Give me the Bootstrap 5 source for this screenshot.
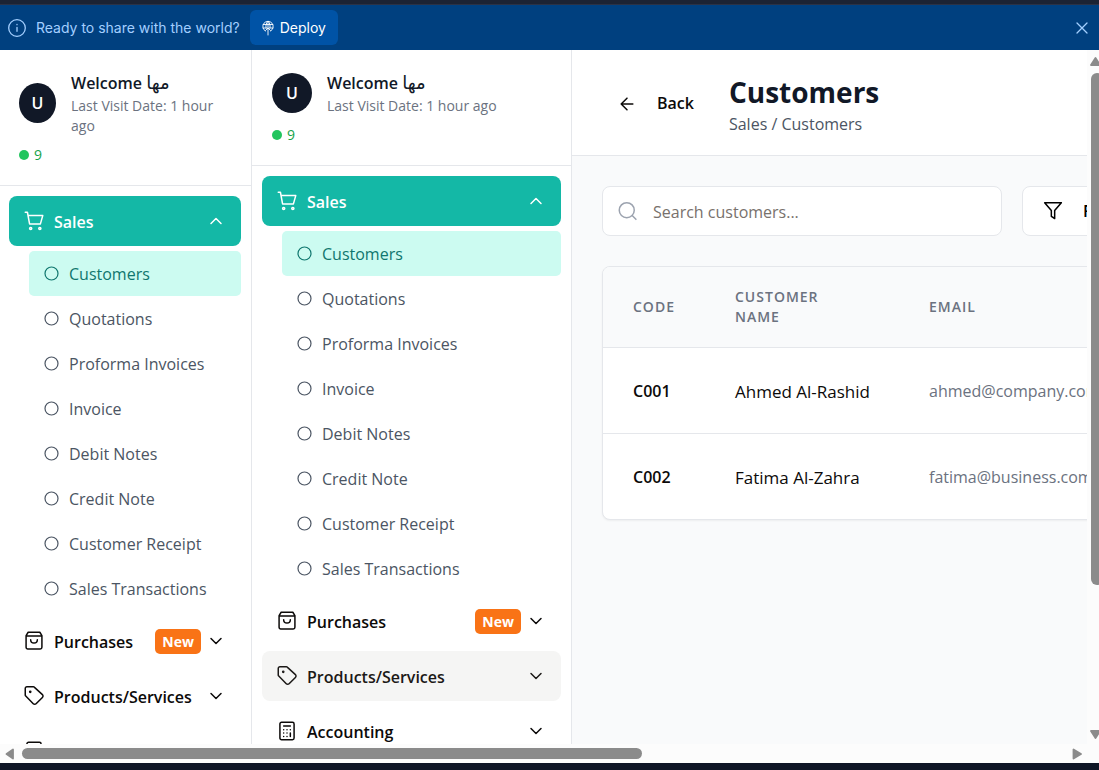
<!DOCTYPE html>
<html lang="en">
<head>
<meta charset="utf-8">
<meta name="viewport" content="width=device-width, initial-scale=1">
<title>Customers</title>
<link href="https://cdn.jsdelivr.net/npm/bootstrap@5.3.0/dist/css/bootstrap.min.css" rel="stylesheet">
<style>
  :root { --line: #e5e7eb; --ink: #111827; --muted: #6b7280; --thumb: #8b8b8b; }
  body { font-family: "Open Sans", "Noto Sans", "DejaVu Sans", sans-serif; font-size: 16px; line-height: 25px; background: #0e1525; color: #0c0a09; }
  svg { fill: none; stroke: currentColor; stroke-width: 1.8; stroke-linecap: round; stroke-linejoin: round; flex: none; }
  .ico { width: 20px; height: 20px; }
  .shell { height: 100vh; padding: 4px 0 7px; background: #0e1525; }
  .deploy-bar { height: 46px; background: #00407f; color: #a3cfff; border-top: 1px solid #2b3245; font: 14px/20px Inter, "Noto Sans", sans-serif; box-shadow: 0 -4px 0 #1c2333; }
  .deploy-note { margin: 0 10px; }
  .btn-deploy { --bs-btn-color: #fff; --bs-btn-bg: #0053a6; --bs-btn-hover-bg: #0062c4; --bs-btn-hover-color: #fff; height: 35px; border: 0; border-radius: 6px; font: inherit; padding: 0 12px 0 10px; }
  .plain { border: 0; background: none; color: inherit; padding: 0; }
  .pane { background: #fff; }
  .side { flex: 0 0 320px; border-right: 1px solid var(--line); background: #fff; overflow: hidden; }
  .side-narrow { flex-basis: 253px; margin-left: -1px; }
  .user-box { padding: 20px; border-bottom: 1px solid var(--line); }
  .user-row { gap: 15px; }
  .user-text { min-width: 0; padding-top: 1px; }
  .avatar { flex: 0 0 40px; height: 40px; background: var(--ink); color: #fff; border-radius: 50%; font-weight: 600; }
  .side-narrow .avatar { flex: 0 0 37px; }
  .user-name { color: var(--ink); font-weight: 600; }
  .arabic { font: 18px/20px "DejaVu Sans", sans-serif; }
  .visit { font-size: 14px; line-height: 20px; color: var(--muted); }
  .online { font-size: 14px; line-height: 20px; color: #16a34a; margin-top: 9px; gap: 5px; }
  .dot { width: 10px; height: 10px; border-radius: 50%; background: #22c55e; }
  .menu { padding: 10px; gap: 5px; }
  .menu-btn { height: 50px; padding: 2px 15px 0; gap: 10px; border: 0; background: none; border-radius: 8px; text-align: left; font-weight: 600; white-space: nowrap; color: #0c0a09; }
  .menu-btn svg, .menu-btn .tag-new, .sub a svg { margin-bottom: 2px; }
  .menu-btn.open { background: #14b8a6; color: #fff; }
  .menu-btn.hovered { background: #f5f5f4; color: #1c1917; }
  .tag-new { background: #f97316; color: #fff; font-size: 14px; line-height: 25px; font-weight: 700; border-radius: 5px; padding: 0 7px; margin-right: -5px; }
  .sub { padding-left: 20px; }
  .sub a { height: 45px; padding: 2px 15px 0; gap: 10px; color: #4b5563; text-decoration: none; border-radius: 5px; }
  .sub a.current { background: #ccfbf1; color: #0f766e; }
  .ring { width: 15px; height: 15px; }
  .main { min-width: 0; overflow: hidden; background: #f9fafb; }
  .page-head { background: #fff; border-bottom: 1px solid var(--line); padding: 20px 45px 18px; gap: 35px; }
  .page-head h1 { font-size: 28px; line-height: 40px; font-weight: 700; color: var(--ink); }
  .title-block { padding-top: 2px; }
  .back-btn { gap: 20px; }
  .crumbs { color: #4b5563; }
  .body-pad { padding: 30px; }
  .tools { gap: 20px; margin-bottom: 30px; }
  .search { flex: 0 0 400px; height: 50px; background: #fff; border: 1px solid var(--line); border-radius: 8px; padding: 0 15px; gap: 15px; }
  .search svg { color: #9ca3af; }
  .search input { border: 0; outline: 0; background: none; padding: 2px 0 0; min-width: 0; }
  .search input::placeholder { color: #78716c; opacity: 1; }
  .btn-filter { height: 50px; background: #fff; border: 1px solid var(--line); border-radius: 8px; padding: 0 20px; gap: 20px; font-weight: 600; }
  .grid-card { width: 1100px; border: 1px solid var(--line); border-radius: 8px; background: #fff; overflow: hidden; box-shadow: 0 1px 2px rgba(0,0,0,.05); }
  .grid-card table { table-layout: fixed; width: 100%; }
  .grid-card th { height: 80px; padding: 0 30px; font-size: 14px; line-height: 20px; font-weight: 600; letter-spacing: 1px; color: var(--muted); background: #f9fafb; }
  .grid-card td { height: 86px; padding: 2px 30px 0; border-top: 1px solid var(--line); white-space: nowrap; font-size: 17px; }
  .grid-card td.code { font-size: 16px; font-weight: 600; }
  .grid-card td.mail { color: var(--muted); font-size: 16px; }
  .c-code { width: 102px; } .c-name { width: 194px; }
  .vbar { flex: 0 0 12px; background: #fcfcfc; overflow: hidden; padding: 7px 0 5px 4px; }
  .hbar { height: 19px; background: #fcfcfc; padding: 0 17px 0 5px; }
  .vbar svg, .hbar svg { fill: var(--thumb); stroke: var(--thumb); }
  .vbar svg { margin-left: -4px; margin-bottom: 7px; }
  .vbar svg:last-child { margin-bottom: 0; }
  .vthumb { flex: 0 0 75%; width: 12px; background: var(--thumb); border-radius: 6px; }
  .hthumb { flex: 62 1 0; height: 11px; background: var(--thumb); border-radius: 6px; }
  .hrest { flex: 43 1 0; }
</style>
</head>
<body>
<svg width="0" height="0" class="position-absolute" aria-hidden="true">
  <symbol id="cart" viewBox="0 0 24 24"><circle cx="8" cy="21" r="1.300"/><circle cx="19" cy="21" r="1.300"/><path d="M1.500 1.500h2.600l2.600 14h13L22.500 5.500H5"/></symbol>
  <symbol id="bag" viewBox="0 0 24 24"><path d="M5 1.500h14l2.500 4v14a2 2 0 0 1-2 2h-15a2 2 0 0 1-2-2v-14zM3 6h18M16 10.500a4 4 0 0 1-8 0"/></symbol>
  <symbol id="tag" viewBox="0 0 24 24"><path d="M12.600 1.600A2 2 0 0 0 11.200 1H3.500a2 2 0 0 0-2 2v7.700a2 2 0 0 0 .6 1.400l9 9.200a2.400 2.400 0 0 0 3.400 0l7.600-7.600a2.400 2.400 0 0 0 0-3.400z"/><circle cx="7.500" cy="7" r=".7" fill="currentColor"/></symbol>
  <symbol id="calc" viewBox="0 0 24 24"><rect x="3.500" y="1.500" width="17" height="21" rx="2"/><path d="M8 6h8M16 14.500v4M16 10.500h.01M12 10.500h.01M8 10.500h.01M12 14.500h.01M8 14.500h.01M12 18.500h.01M8 18.500h.01"/></symbol>
  <symbol id="up" viewBox="0 0 24 24"><path d="m18 15-6-6-6 6"/></symbol>
  <symbol id="down" viewBox="0 0 24 24"><path d="m6 9 6 6 6-6"/></symbol>
  <symbol id="ring" viewBox="0 0 15 15"><circle cx="7.500" cy="7.500" r="6.500" stroke-width="1.200"/></symbol>
</svg>

<div class="shell d-flex flex-column overflow-hidden">
  <header class="deploy-bar d-flex align-items-center flex-shrink-0 px-2">
    <svg width="18" height="18" viewBox="0 0 18 18"><g stroke-width="1.300"><circle cx="9" cy="9" r="8.300"/><path d="M9 8.300v4M9 5.500v.2"/></g></svg>
    <span class="deploy-note">Ready to share with the world?</span>
    <button type="button" class="btn btn-deploy d-flex align-items-center gap-1">
      <svg width="16" height="16" viewBox="0 0 16 16"><g stroke-width=".9"><path d="M5.300 11A5.200 5.200 0 1 1 10.700 11M3.200 4.500h9.600M3 8h4M9 8h4M6 8C5.500 5 6.500 2.500 8 1.300c1.500 1.200 2.500 3.700 2 6.700M8 1.300V15M5.500 10.500 8 8l2.500 2.500"/></g></svg>
      <span>Deploy</span>
    </button>
    <button type="button" class="plain ms-auto d-flex" aria-label="Close"><svg width="18" height="18" viewBox="0 0 18 18"><path stroke-width="1.300" d="m4 4 10 10M14 4 4 14"/></svg></button>
  </header>

  <div class="pane d-flex flex-grow-1 overflow-hidden">
    <aside class="side side-narrow">
      <div class="user-box">
        <div class="user-row d-flex align-items-center">
          <div class="avatar d-flex align-items-center justify-content-center">U</div>
          <div class="user-text flex-fill"><div class="user-name">Welcome <span class="arabic">مها</span></div><div class="visit">Last Visit Date: 1 hour ago</div></div>
        </div>
        <div class="online d-flex align-items-center"><span class="dot"></span>9</div>
      </div>
      <nav class="menu d-flex flex-column">
        <button type="button" class="menu-btn open d-flex align-items-center"><svg class="ico"><use href="#cart"/></svg><span class="flex-fill">Sales</span><svg class="ico"><use href="#up"/></svg></button>
        <div class="sub d-flex flex-column">
          <a href="#" class="current d-flex align-items-center"><svg class="ring"><use href="#ring"/></svg>Customers</a>
          <a href="#" class="d-flex align-items-center"><svg class="ring"><use href="#ring"/></svg>Quotations</a>
          <a href="#" class="d-flex align-items-center"><svg class="ring"><use href="#ring"/></svg>Proforma Invoices</a>
          <a href="#" class="d-flex align-items-center"><svg class="ring"><use href="#ring"/></svg>Invoice</a>
          <a href="#" class="d-flex align-items-center"><svg class="ring"><use href="#ring"/></svg>Debit Notes</a>
          <a href="#" class="d-flex align-items-center"><svg class="ring"><use href="#ring"/></svg>Credit Note</a>
          <a href="#" class="d-flex align-items-center"><svg class="ring"><use href="#ring"/></svg>Customer Receipt</a>
          <a href="#" class="d-flex align-items-center"><svg class="ring"><use href="#ring"/></svg>Sales Transactions</a>
        </div>
        <button type="button" class="menu-btn d-flex align-items-center"><svg class="ico"><use href="#bag"/></svg><span class="flex-fill">Purchases</span><span class="tag-new">New</span><svg class="ico"><use href="#down"/></svg></button>
        <button type="button" class="menu-btn d-flex align-items-center"><svg class="ico"><use href="#tag"/></svg><span class="flex-fill">Products/Services</span><svg class="ico"><use href="#down"/></svg></button>
        <button type="button" class="menu-btn d-flex align-items-center" aria-label="More"><svg class="ico"><use href="#calc"/></svg></button>
      </nav>
    </aside>

    <aside class="side">
      <div class="user-box">
        <div class="user-row d-flex align-items-center">
          <div class="avatar d-flex align-items-center justify-content-center">U</div>
          <div class="user-text flex-fill"><div class="user-name">Welcome <span class="arabic">مها</span></div><div class="visit">Last Visit Date: 1 hour ago</div></div>
        </div>
        <div class="online d-flex align-items-center"><span class="dot"></span>9</div>
      </div>
      <nav class="menu d-flex flex-column">
        <button type="button" class="menu-btn open d-flex align-items-center"><svg class="ico"><use href="#cart"/></svg><span class="flex-fill">Sales</span><svg class="ico"><use href="#up"/></svg></button>
        <div class="sub d-flex flex-column">
          <a href="#" class="current d-flex align-items-center"><svg class="ring"><use href="#ring"/></svg>Customers</a>
          <a href="#" class="d-flex align-items-center"><svg class="ring"><use href="#ring"/></svg>Quotations</a>
          <a href="#" class="d-flex align-items-center"><svg class="ring"><use href="#ring"/></svg>Proforma Invoices</a>
          <a href="#" class="d-flex align-items-center"><svg class="ring"><use href="#ring"/></svg>Invoice</a>
          <a href="#" class="d-flex align-items-center"><svg class="ring"><use href="#ring"/></svg>Debit Notes</a>
          <a href="#" class="d-flex align-items-center"><svg class="ring"><use href="#ring"/></svg>Credit Note</a>
          <a href="#" class="d-flex align-items-center"><svg class="ring"><use href="#ring"/></svg>Customer Receipt</a>
          <a href="#" class="d-flex align-items-center"><svg class="ring"><use href="#ring"/></svg>Sales Transactions</a>
        </div>
        <button type="button" class="menu-btn d-flex align-items-center"><svg class="ico"><use href="#bag"/></svg><span class="flex-fill">Purchases</span><span class="tag-new">New</span><svg class="ico"><use href="#down"/></svg></button>
        <button type="button" class="menu-btn hovered d-flex align-items-center"><svg class="ico"><use href="#tag"/></svg><span class="flex-fill">Products/Services</span><svg class="ico"><use href="#down"/></svg></button>
        <button type="button" class="menu-btn d-flex align-items-center"><svg class="ico"><use href="#calc"/></svg><span class="flex-fill">Accounting</span><svg class="ico"><use href="#down"/></svg></button>
      </nav>
    </aside>

    <main class="main flex-fill">
      <div class="page-head d-flex align-items-center">
        <button type="button" class="plain back-btn d-flex align-items-center fw-semibold"><svg class="ico" viewBox="0 0 24 24"><path d="m12 19-7-7 7-7M19 12H5"/></svg>Back</button>
        <div class="title-block"><h1 class="m-0">Customers</h1><div class="crumbs">Sales / Customers</div></div>
      </div>
      <div class="body-pad">
        <div class="tools d-flex">
          <label class="search d-flex align-items-center"><svg class="ico" viewBox="0 0 24 24"><circle cx="10.500" cy="11" r="9"/><path d="m21.500 22-4.500-4.500"/></svg><input class="flex-fill" type="text" aria-label="Search customers" placeholder="Search customers..."></label>
          <button type="button" class="btn-filter d-flex align-items-center flex-shrink-0"><svg class="ico" viewBox="0 0 24 24"><path d="M22 2H2l8 9.500V18.500l4 2.500v-9.500z"/></svg>Filter</button>
        </div>
        <div class="grid-card">
          <table>
            <thead><tr><th class="c-code">CODE</th><th class="c-name">CUSTOMER<br>NAME</th><th>EMAIL</th></tr></thead>
            <tbody>
              <tr><td class="code">C001</td><td>Ahmed Al-Rashid</td><td class="mail">ahmed@company.com</td></tr>
              <tr><td class="code">C002</td><td>Fatima Al-Zahra</td><td class="mail">fatima@business.com</td></tr>
            </tbody>
          </table>
        </div>
      </div>
    </main>

    <div class="vbar d-flex flex-column" aria-hidden="true">
      <svg width="16" height="9" viewBox="0 0 16 9"><path d="M8.500 1 13 8H4z"/></svg>
      <div class="vthumb"></div>
      <svg class="mt-auto" width="16" height="9" viewBox="0 0 16 9"><path d="M4 1h9L8.500 8z"/></svg>
    </div>
  </div>
  <div class="hbar d-flex align-items-center flex-shrink-0" aria-hidden="true">
    <svg class="me-2" width="9" height="12" viewBox="0 0 9 12"><path d="M8 1.500v9L1.500 6z"/></svg>
    <div class="hthumb"></div><div class="hrest"></div>
    <svg width="10" height="12" viewBox="0 0 10 12"><path d="M1.500 1.500v9L9 6z"/></svg>
  </div>
</div>
<script src="https://cdn.jsdelivr.net/npm/bootstrap@5.3.0/dist/js/bootstrap.bundle.min.js"></script>
</body>
</html>
